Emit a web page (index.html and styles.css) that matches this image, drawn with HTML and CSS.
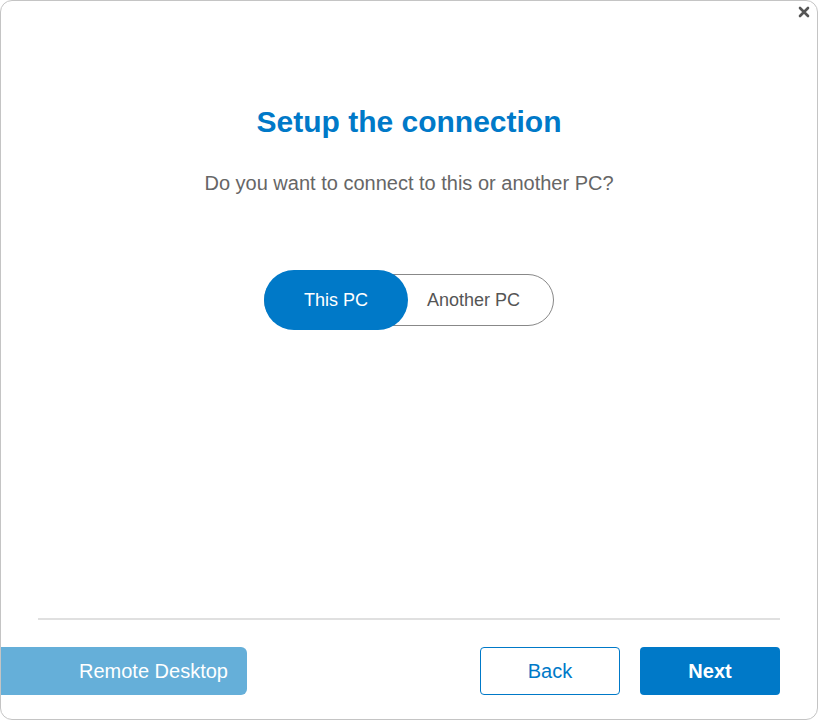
FILE: index.html
```html
<!DOCTYPE html>
<html lang="en">
<head>
    <meta charset="UTF-8">
    <meta name="viewport" content="width=device-width, initial-scale=1.0">
    <title>Setup the connection</title>
    <link rel="stylesheet" href="styles.css">
</head>
<body>
    <div class="window">
        <button class="close-btn" aria-label="Close">
            <svg width="12" height="12" viewBox="0 0 12 12"><path d="M2 2 L10 10 M10 2 L2 10" stroke="#555" stroke-width="2.6" stroke-linecap="round"/></svg>
        </button>
        <div class="content">
            <h1>Setup the connection</h1>
            <p class="subtitle">Do you want to connect to this or another PC?</p>
            <div class="toggle">
                <button class="toggle-opt active">This PC</button>
                <button class="toggle-opt">Another PC</button>
            </div>
        </div>
        <div class="footer">
            <hr class="divider">
            <div class="actions">
                <button class="remote-btn">Remote Desktop</button>
                <div class="nav">
                    <button class="back-btn">Back</button>
                    <button class="next-btn">Next</button>
                </div>
            </div>
        </div>
    </div>
</body>
</html>
```

FILE: styles.css
```css
html, body {
    margin: 0;
    height: 100%;
}
body {
    font-family: "Liberation Sans", Arial, sans-serif;
    background: #fff;
    color: #666;
}
.window {
    position: relative;
    box-sizing: border-box;
    width: 818px;
    height: 720px;
    border: 1px solid #c4c4c4;
    border-radius: 12px;
    display: flex;
    flex-direction: column;
    overflow: hidden;
}
.close-btn {
    position: absolute;
    top: 3px;
    right: 5px;
    width: 16px;
    height: 16px;
    padding: 2px;
    border: none;
    background: none;
}
.content {
    flex: 1;
    display: flex;
    flex-direction: column;
    align-items: center;
    padding-top: 104px;
}
h1 {
    margin: 0;
    font-size: 30px;
    font-weight: bold;
    color: #0079c8;
}
.subtitle {
    margin: 33px 0 0;
    font-size: 20px;
    color: #666;
}
.toggle {
    margin-top: 79px;
    display: flex;
    align-items: center;
    width: 290px;
    height: 52px;
    box-sizing: border-box;
    border: 1px solid #888;
    border-radius: 26px;
}
.toggle-opt {
    font-family: inherit;
    font-size: 18px;
    color: #555;
    background: none;
    border: none;
    flex: 1;
    height: 100%;
    padding: 0 14px 0 0;
}
.toggle-opt.active {
    flex: 0 0 144px;
    height: 60px;
    margin-left: -1px;
    padding: 0;
    background: #0079c8;
    color: #fff;
    border-radius: 30px;
}
.footer {
    padding-bottom: 24px;
}
.divider {
    margin: 0 37px 27px;
    border: none;
    border-top: 2px solid #e0e0e0;
}
.actions {
    display: flex;
    justify-content: space-between;
    align-items: center;
    padding-right: 37px;
}
.actions button {
    font-family: inherit;
    font-size: 20px;
    height: 48px;
}
.remote-btn {
    width: 247px;
    margin-left: -1px;
    padding: 0 0 0 79px;
    text-align: left;
    background: #65afd9;
    color: #fff;
    border: none;
    border-radius: 0 6px 6px 0;
}
.nav {
    display: flex;
    gap: 20px;
}
.back-btn {
    width: 140px;
    background: #fff;
    color: #0079c8;
    border: 1px solid #0079c8;
    border-radius: 4px;
}
.next-btn {
    width: 140px;
    background: #0079c8;
    color: #fff;
    font-weight: bold;
    border: none;
    border-radius: 4px;
}
```
